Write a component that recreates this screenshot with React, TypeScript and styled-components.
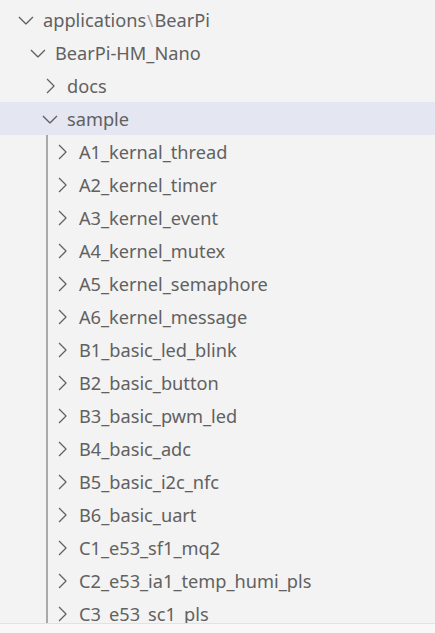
import React from 'react';
import styled, { createGlobalStyle } from 'styled-components';

type Node = {
  name: string;
  level: number;
  open?: boolean;
  selected?: boolean;
  compact?: string[];
};

const nodes: Node[] = [
  { name: 'applications', compact: ['applications', 'BearPi'], level: 0, open: true },
  { name: 'BearPi-HM_Nano', level: 1, open: true },
  { name: 'docs', level: 2 },
  { name: 'sample', level: 2, open: true, selected: true },
  { name: 'A1_kernal_thread', level: 3 },
  { name: 'A2_kernel_timer', level: 3 },
  { name: 'A3_kernel_event', level: 3 },
  { name: 'A4_kernel_mutex', level: 3 },
  { name: 'A5_kernel_semaphore', level: 3 },
  { name: 'A6_kernel_message', level: 3 },
  { name: 'B1_basic_led_blink', level: 3 },
  { name: 'B2_basic_button', level: 3 },
  { name: 'B3_basic_pwm_led', level: 3 },
  { name: 'B4_basic_adc', level: 3 },
  { name: 'B5_basic_i2c_nfc', level: 3 },
  { name: 'B6_basic_uart', level: 3 },
  { name: 'C1_e53_sf1_mq2', level: 3 },
  { name: 'C2_e53_ia1_temp_humi_pls', level: 3 },
  { name: 'C3_e53_sc1_pls', level: 3 },
];

const Chevron: React.FC<{ open?: boolean }> = ({ open }) => (
  <svg width="24" height="24" viewBox="0 0 16 16" fill="currentColor">
    {open ? (
      <path d="M7.976 10.072l4.357-4.357.62.618L8.284 11h-.618L3 6.333l.619-.618 4.357 4.357z" />
    ) : (
      <path d="M10.072 8.024L5.715 3.667l.618-.62L11 7.716v.618L6.333 13l-.618-.619 4.357-4.357z" />
    )}
  </svg>
);

const App: React.FC = () => {
  return (
    <>
      <GlobalStyle />
      <Explorer>
        <Tree>
          {nodes.map((node, i) => (
            <Row key={i} selected={node.selected}>
              {Array.from({ length: node.level }).map((_, g) => (
                <Indent key={g} guide={node.level === 3 && g === 2} />
              ))}
              <Twistie>
                <Chevron open={node.open} />
              </Twistie>
              <Label>
                {node.compact
                  ? node.compact.map((part, p) => (
                      <React.Fragment key={p}>
                        {p > 0 && <Sep>\</Sep>}
                        {part}
                      </React.Fragment>
                    ))
                  : node.name}
              </Label>
            </Row>
          ))}
        </Tree>
        <Footer />
      </Explorer>
    </>
  );
};

const GlobalStyle = createGlobalStyle`
  html, body {
    margin: 0;
    padding: 0;
    background: #f3f3f3;
  }
`;

const Explorer = styled.div`
  width: 435px;
  height: 633px;
  display: flex;
  flex-direction: column;
  background: #f3f3f3;
  font-family: 'Noto Sans', 'Open Sans', sans-serif;
  font-size: 18.2px;
  color: #616161;
  overflow: hidden;
`;

const Tree = styled.div`
  height: 623px;
  padding-top: 3px;
  box-sizing: border-box;
  overflow: hidden;
  display: flex;
  flex-direction: column;
  flex-shrink: 0;
`;

const Row = styled.div<{ selected?: boolean }>`
  height: 33px;
  flex-shrink: 0;
  display: flex;
  align-items: stretch;
  padding-left: 14px;
  background: ${({ selected }) => (selected ? '#e4e6f1' : 'transparent')};
`;

const Indent = styled.div<{ guide?: boolean }>`
  width: ${({ guide }) => (guide ? '4px' : '12px')};
  flex-shrink: 0;
  box-sizing: border-box;
  border-left: ${({ guide }) => (guide ? '2px solid #a9a9a9' : 'none')};
  margin-left: ${({ guide }) => (guide ? '8px' : '0')};
`;

const Twistie = styled.div`
  width: 24px;
  display: flex;
  align-items: center;
  justify-content: center;
  flex-shrink: 0;
  margin-right: 5px;
  color: #616161;
`;

const Label = styled.div`
  display: flex;
  align-items: center;
  white-space: nowrap;
  line-height: 33px;
  padding-top: 1px;
`;

const Sep = styled.span`
  color: #a0a0a0;
  font-size: 17px;
  margin: 0 1px;
`;

const Footer = styled.div`
  flex: 1;
  border-top: 1px solid #e2e2e2;
  background: #f8f8f8;
`;

export default App;
